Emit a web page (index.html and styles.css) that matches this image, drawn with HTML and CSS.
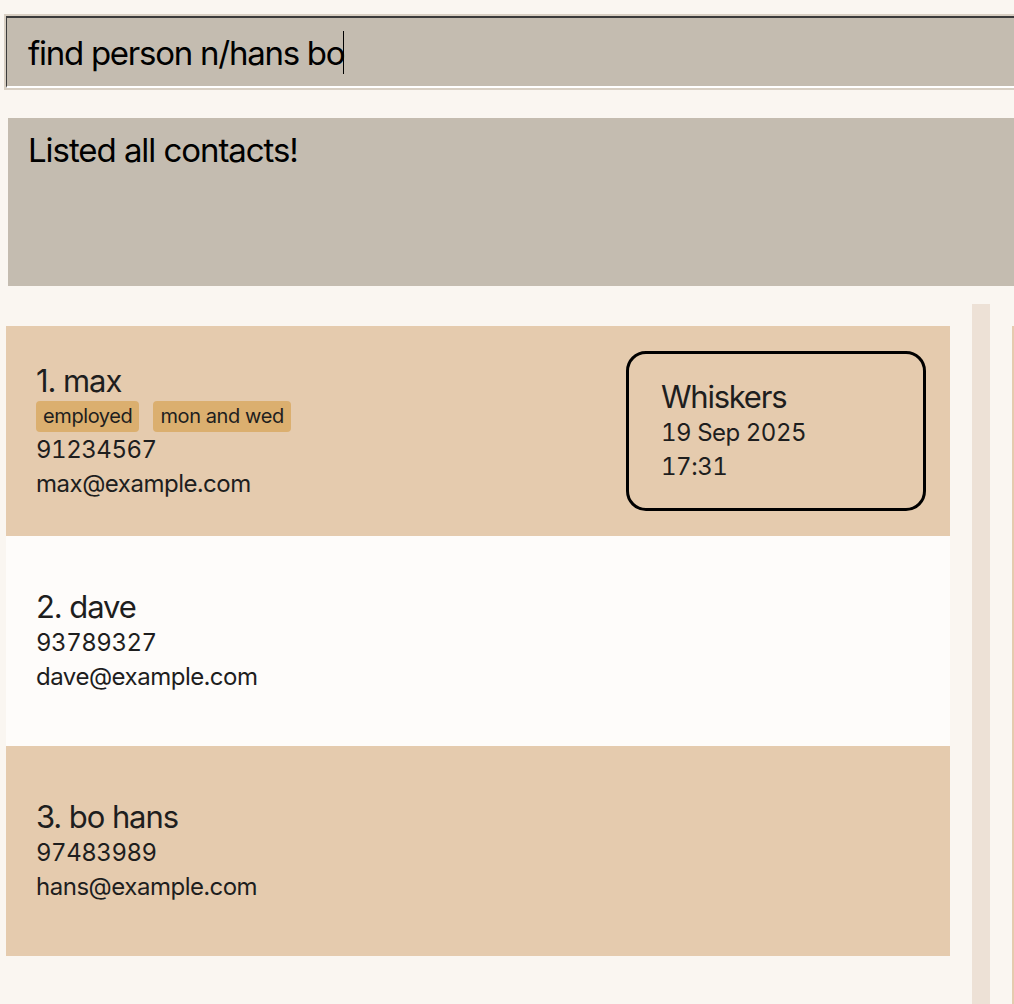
FILE: index.html
```html
<!DOCTYPE html>
<html>
<head>
<meta charset="utf-8">
<link rel="stylesheet" href="styles.css">
</head>
<body>
<div class="app">
  <div class="cmd-wrap">
    <div class="cmd">
      <div class="cmd-inner">find person n/hans bo<span class="caret"></span></div>
    </div>
  </div>
  <div class="result">Listed all contacts!</div>
  <div class="main">
    <div class="list">
      <div class="card odd">
        <div class="info">
          <div class="name">1. max</div>
          <div class="tags"><span class="tag">employed</span><span class="tag">mon and wed</span></div>
          <div class="line">91234567</div>
          <div class="line">max@example.com</div>
        </div>
        <div class="pet">
          <div class="pet-name">Whiskers</div>
          <div class="line">19 Sep 2025</div>
          <div class="line">17:31</div>
        </div>
      </div>
      <div class="card even">
        <div class="info">
          <div class="name">2. dave</div>
          <div class="line">93789327</div>
          <div class="line">dave@example.com</div>
        </div>
      </div>
      <div class="card odd">
        <div class="info">
          <div class="name">3. bo hans</div>
          <div class="line">97483989</div>
          <div class="line">hans@example.com</div>
        </div>
      </div>
    </div>
    <div class="track"></div>
    <div class="side"></div>
  </div>
</div>
</body>
</html>
```
FILE: styles.css
```css
html, body {
  margin: 0;
  padding: 0;
  overflow: hidden;
  background: #faf6f1;
  font-family: "Inter", "Noto Sans", sans-serif;
  color: #1e1e1e;
}
.app {
  width: 1014px;
  height: 1004px;
  overflow: hidden;
}
.cmd-wrap {
  padding: 14px 0 0 4px;
}
.cmd {
  width: 1100px;
  border: 2px solid #d8cfc3;
}
.cmd-inner {
  background: #c4bcb0;
  border-top: 2px solid #3b3b3b;
  border-left: 1px solid #3b3b3b;
  border-bottom: 2px solid #ffffff;
  padding: 13px 0 0 21px;
  box-sizing: border-box;
  height: 72px;
  font-size: 33px;
  line-height: 40px;
  letter-spacing: -0.038em;
  color: #000;
  white-space: nowrap;
}
.caret {
  display: inline-block;
  width: 1px;
  height: 43px;
  background: #000;
  vertical-align: -9px;
  margin-left: -1px;
}
.result {
  margin: 28px 0 0 8px;
  width: 1100px;
  height: 168px;
  box-sizing: border-box;
  background: #c4bcb0;
  padding: 12px 0 0 20px;
  font-size: 33px;
  line-height: 40px;
  letter-spacing: -0.032em;
  color: #000;
}
.main {
  display: flex;
  margin-top: 18px;
  gap: 22px;
  height: 720px;
}
.list {
  padding: 22px 0 0 6px;
  width: 944px;
  flex: none;
}
.card {
  height: 210px;
  display: flex;
  align-items: center;
  justify-content: space-between;
  padding: 0 24px 0 30px;
  box-sizing: border-box;
}
.odd { background: #e5cbae; }
.even { background: #fefcfa; }
.name {
  font-size: 31px;
  line-height: 38px;
  letter-spacing: -0.035em;
}
.line {
  font-size: 24px;
  line-height: 34px;
  letter-spacing: -0.02em;
  font-feature-settings: "tnum" 1;
}
.tags {
  display: flex;
  gap: 14px;
  margin-bottom: 1px;
  padding-top: 1px;
}
.tag {
  background: #dbaf6f;
  border-radius: 4px;
  height: 31px;
  line-height: 31px;
  font-size: 20px;
  padding: 0 7px;
  letter-spacing: -0.02em;
}
.pet {
  width: 300px;
  height: 160px;
  box-sizing: border-box;
  border: 3px solid #000;
  border-radius: 20px;
  padding: 0 0 0 32px;
  display: flex;
  flex-direction: column;
  justify-content: center;
}
.pet-name {
  font-size: 31px;
  line-height: 38px;
  letter-spacing: -0.04em;
}
.track {
  width: 18px;
  flex: none;
  background: #ede1d6;
}
.side {
  width: 200px;
  flex: none;
  margin-top: 22px;
  background: #e5cbae;
}
```
